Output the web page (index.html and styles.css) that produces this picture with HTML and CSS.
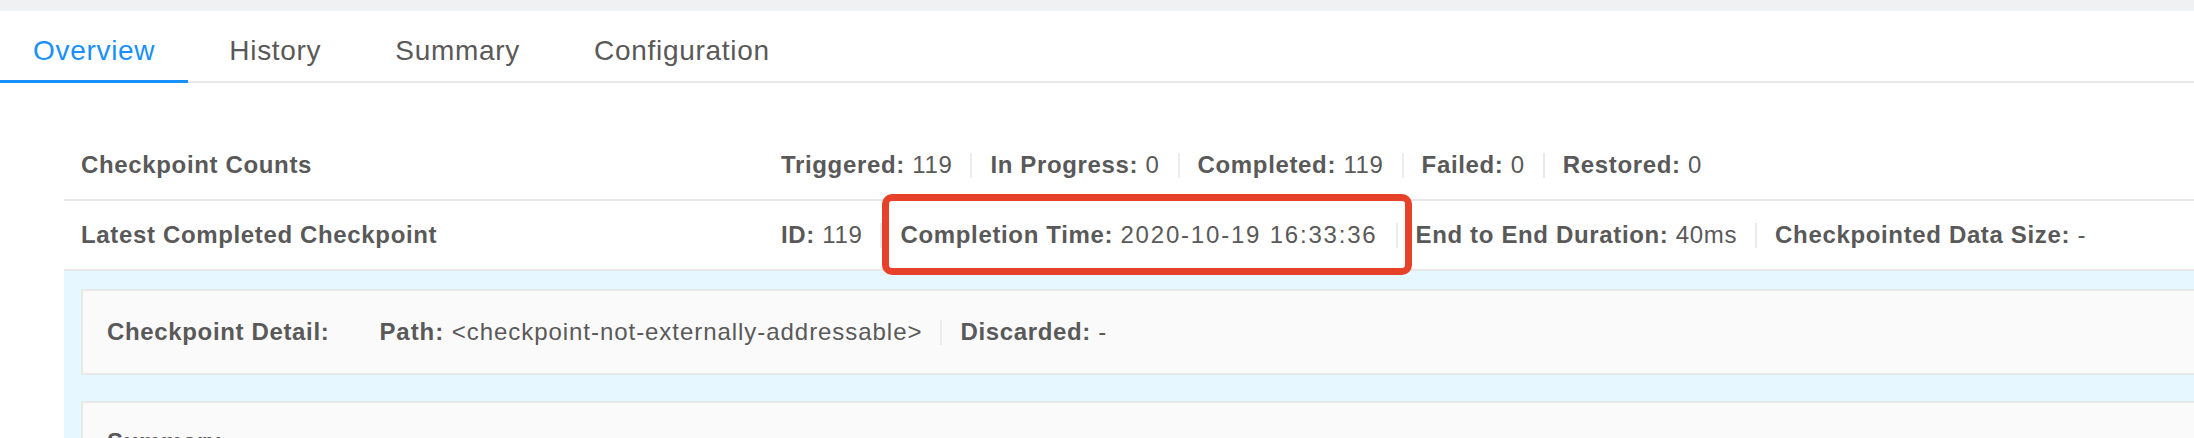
FILE: index.html
```html
<!DOCTYPE html>
<html lang="en">
<head>
<meta charset="utf-8">
<title>Checkpoints Overview</title>
<link rel="stylesheet" href="styles.css">
</head>
<body>
<div class="page">
  <div class="topband"></div>
  <nav class="tabs">
    <a class="tab active">Overview</a>
    <a class="tab">History</a>
    <a class="tab">Summary</a>
    <a class="tab">Configuration</a>
  </nav>
  <section class="content">
    <div class="table">
      <div class="row">
        <div class="label">Checkpoint Counts</div>
        <div class="value">
          <span class="item"><b>Triggered:</b> 119</span>
          <span class="divider"></span>
          <span class="item"><b>In Progress:</b> 0</span>
          <span class="divider"></span>
          <span class="item"><b>Completed:</b> 119</span>
          <span class="divider"></span>
          <span class="item"><b>Failed:</b> 0</span>
          <span class="divider"></span>
          <span class="item"><b>Restored:</b> 0</span>
        </div>
      </div>
      <div class="row">
        <div class="label">Latest Completed Checkpoint</div>
        <div class="value">
          <span class="item"><b>ID:</b> 119</span>
          <span class="divider"></span>
          <span class="item highlighted"><b>Completion Time:</b> <span class="ts">2020-10-19 16:33:36</span><span class="annotation"></span></span>
          <span class="divider"></span>
          <span class="item"><b>End to End Duration:</b> 40ms</span>
          <span class="divider"></span>
          <span class="item"><b>Checkpointed Data Size:</b> -</span>
        </div>
      </div>
      <div class="expanded">
        <div class="card">
          <b class="card-title">Checkpoint Detail:</b>
          <span class="item path"><b>Path:</b> &lt;checkpoint-not-externally-addressable&gt;</span>
          <span class="divider"></span>
          <span class="item"><b>Discarded:</b> -</span>
        </div>
        <div class="card card-tall">
          <b class="card-title">Summary</b>
        </div>
      </div>
    </div>
  </section>
</div>
</body>
</html>
```

FILE: styles.css
```css
html, body {
  margin: 0;
  padding: 0;
  overflow: hidden;
  background: #ffffff;
}

body {
  font-family: "Liberation Sans", Arial, sans-serif;
  color: #595959;
}

.page {
  width: 100%;
}

.topband {
  height: 11px;
  background: #f0f1f3;
}

.tabs {
  display: flex;
  border-bottom: 2px solid #e8e8e8;
}

.tab {
  font-size: 28px;
  line-height: 40px;
  letter-spacing: 0.7px;
  padding: 20px 33px 9px;
  margin-right: 8px;
  margin-bottom: -2px;
  border-bottom: 3px solid transparent;
  color: #595959;
  white-space: nowrap;
}

.tab.active {
  color: #1890ff;
  border-bottom-color: #1890ff;
}

.content {
  padding: 48px 0 0 64px;
}

.table {
  margin-right: -60px;
  font-size: 24px;
  line-height: 32px;
  letter-spacing: 0.65px;
}

.row {
  display: grid;
  grid-template-columns: 717px 1fr;
  align-items: center;
  height: 70px;
  box-sizing: border-box;
  border-bottom: 2px solid #e8e8e8;
}

.label {
  padding-left: 17px;
  font-weight: 700;
  white-space: nowrap;
}

.value {
  display: flex;
  align-items: center;
  white-space: nowrap;
}

.item {
  white-space: nowrap;
}

.item b {
  font-weight: 700;
}

.ts {
  letter-spacing: 1.8px;
}

.path {
  letter-spacing: 0.95px;
}

.divider {
  display: inline-block;
  width: 2px;
  height: 25px;
  margin: 0 18px;
  background: #ebebeb;
}

.highlighted {
  position: relative;
}

.annotation {
  position: absolute;
  left: -18px;
  top: -25px;
  width: 530px;
  height: 81px;
  box-sizing: border-box;
  border: 7px solid #e8412a;
  border-radius: 10px;
  z-index: 2;
}

.expanded {
  background: #e6f7ff;
  padding: 18px 0 0 17px;
  height: 200px;
}

.card {
  display: flex;
  align-items: center;
  height: 86px;
  box-sizing: border-box;
  background: #fafafa;
  border: 2px solid #e8e8e8;
  border-right: none;
  padding-left: 24px;
  white-space: nowrap;
}

.card-title {
  font-weight: 700;
  margin-right: 50px;
}

.card-tall {
  margin-top: 26px;
  height: 140px;
  align-items: flex-start;
  padding-top: 23px;
}
```
